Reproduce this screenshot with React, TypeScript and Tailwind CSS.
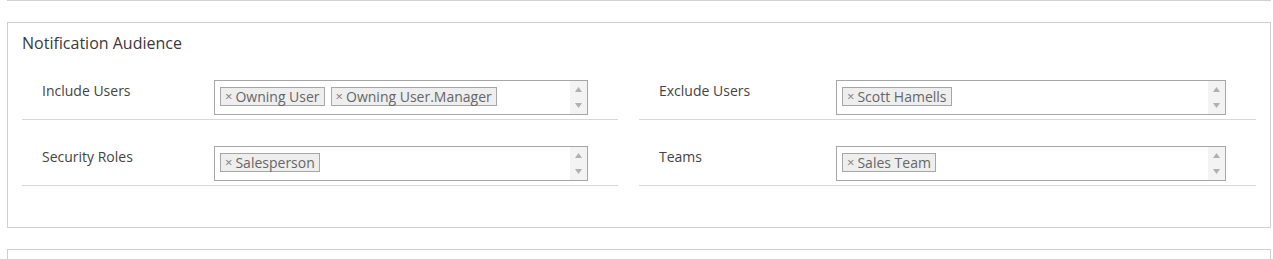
import React from "react";

const FONT = { fontFamily: '"Segoe UI", "Open Sans", "Noto Sans", sans-serif' };

function Tag({ text }: { text: string }) {
  return (
    <span className="inline-flex items-center h-[19px] border border-[#a6a6a6] bg-[#eeeeee] px-[4px] text-[14px] leading-none text-[#666666] whitespace-nowrap">
      <span className="text-[13px] mr-[3px] text-[#808080]">×</span>
      {text}
    </span>
  );
}

function MultiSelect({ tags }: { tags: string[] }) {
  return (
    <div className="flex-1 h-[35px] border border-[#a6a6a6] bg-white flex">
      <div className="flex-1 flex items-start gap-[6px] pt-[6px] pl-[5px]">
        {tags.map((t) => (
          <Tag key={t} text={t} />
        ))}
      </div>
      <div className="w-[17px] bg-[#f3f3f3] flex flex-col items-center justify-between py-[6px]">
        <svg width="7" height="5" viewBox="0 0 7 5">
          <path d="M0 5 L3.5 0 L7 5 Z" fill="#b0b0b0" />
        </svg>
        <svg width="7" height="5" viewBox="0 0 7 5">
          <path d="M0 0 L3.5 5 L7 0 Z" fill="#b0b0b0" />
        </svg>
      </div>
    </div>
  );
}

function Field({ label, tags, labelW }: { label: string; tags: string[]; labelW: string }) {
  return (
    <div className="border-b border-[#d8d8d8] pb-[4px]">
      <div className="flex items-start pl-[20px] pr-[30px]">
        <div className={`${labelW} pt-[1px] text-[14px] leading-[20px] text-[#444]`}>{label}</div>
        <MultiSelect tags={tags} />
      </div>
    </div>
  );
}

export default function App() {
  return (
    <div className="w-[1273px] h-[259px] bg-white overflow-hidden" style={FONT}>
      <div className="ml-[7px] w-[1264px] h-px bg-[#d0d0d0]" />
      <div className="ml-[7px] mt-[21px] w-[1264px] h-[206px] border border-[#cfcfcf] px-[14px]">
        <div className="pt-[8px] text-[16px] leading-[24px] text-[#3a3a3a]">Notification Audience</div>
        <div className="mt-[25px] grid grid-cols-[596px_617px] gap-x-[21px] gap-y-[26px]">
          <Field label="Include Users" labelW="w-[172px]" tags={["Owning User", "Owning User.Manager"]} />
          <Field label="Exclude Users" labelW="w-[177px]" tags={["Scott Hamells"]} />
          <Field label="Security Roles" labelW="w-[172px]" tags={["Salesperson"]} />
          <Field label="Teams" labelW="w-[177px]" tags={["Sales Team"]} />
        </div>
      </div>
      <div className="ml-[7px] mt-[21px] w-[1264px] h-[20px] border-t border-x border-[#cfcfcf]" />
    </div>
  );
}
